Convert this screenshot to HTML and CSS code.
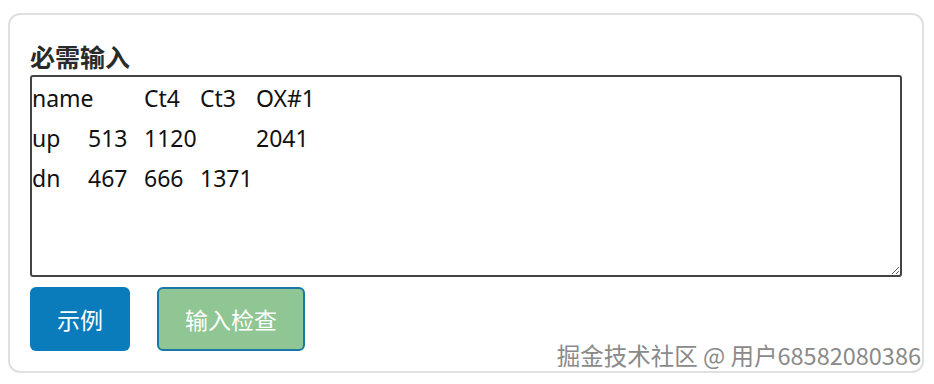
FILE: index.html
```html
<!DOCTYPE html>
<html lang="zh-CN">
<head>
<meta charset="utf-8">
<title>必需输入</title>
<link rel="stylesheet" href="styles.css">
</head>
<body>
<div class="card">
  <div class="title">必需输入</div>
  <textarea class="input" spellcheck="false">name	Ct4	Ct3	OX#1
up	513	1120		2041
dn	467	666	1371</textarea>
  <div class="actions">
    <button class="btn btn-primary">示例</button>
    <button class="btn btn-check">输入检查</button>
  </div>
  <div class="watermark">掘金技术社区 @ 用户68582080386</div>
</div>
</body>
</html>
```
FILE: styles.css
```css
html, body {
  background: #ffffff;
}
body {
  margin: 13px 10px 0 8px;
  font-family: "Noto Sans", "Noto Sans CJK SC", sans-serif;
}
.card {
  position: relative;
  box-sizing: border-box;
  height: 360px;
  border: 2px solid #e0e0e0;
  border-radius: 12px;
  padding: 24px 20px 18px 20px;
  display: flex;
  flex-direction: column;
}
.title {
  font-family: "Noto Sans CJK SC", sans-serif;
  font-weight: 700;
  font-size: 25px;
  line-height: 34px;
  color: #2a2a2a;
  margin-bottom: 2px;
}
.input {
  box-sizing: border-box;
  width: 100%;
  height: 202px;
  margin: 0;
  padding: 1px 0 0 0;
  border: 2px solid #444444;
  border-radius: 3px;
  font-family: "Noto Sans", "Noto Sans CJK SC", sans-serif;
  font-size: 23px;
  line-height: 40px;
  color: #111111;
  tab-size: 56px;
  -moz-tab-size: 56px;
  resize: both;
  outline: none;
  white-space: pre;
}
.actions {
  display: flex;
  gap: 27px;
  margin-top: 10px;
}
.btn {
  height: 64px;
  border-radius: 6px;
  font-family: "Noto Sans CJK SC", sans-serif;
  font-size: 23px;
  color: #ffffff;
  cursor: pointer;
  padding: 0;
}
.btn-primary {
  width: 100px;
  background: #0a7bbb;
  border: none;
}
.btn-check {
  width: 148px;
  background: #8fc693;
  border: 2px solid #1a78a8;
}
.watermark {
  position: absolute;
  right: 1px;
  bottom: 2px;
  font-family: "Noto Sans CJK SC", sans-serif;
  font-size: 23.5px;
  line-height: 28px;
  color: #8a8a8a;
  text-shadow: 1px 1px 0 #ffffff, -1px -1px 0 #ffffff, 1px -1px 0 #ffffff, -1px 1px 0 #ffffff;
  white-space: nowrap;
}
```
